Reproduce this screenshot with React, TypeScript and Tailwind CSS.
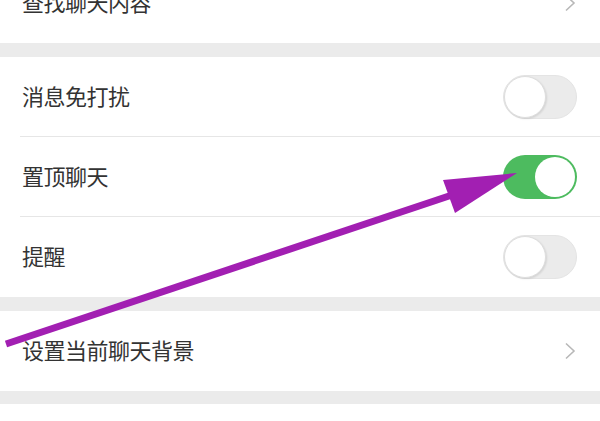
import React from "react";

const font = { fontFamily: '"Noto Sans CJK SC", "Noto Sans", sans-serif' };

function Chevron() {
  return (
    <svg width="12" height="18" viewBox="0 0 12 18" className="mr-[24px]">
      <polyline points="2,1.5 10,9 2,16.5" fill="none" stroke="#b8b8b8" strokeWidth="1.6" />
    </svg>
  );
}

function Toggle({ on }: { on: boolean }) {
  if (on) {
    return (
      <div className="mr-[23px] flex h-[44px] w-[74px] items-center justify-end rounded-full bg-[#4dbb5f] p-[2px]">
        <div className="h-[40px] w-[40px] rounded-full bg-white" />
      </div>
    );
  }
  return (
    <div className="mr-[23px] flex h-[44px] w-[74px] items-center justify-start rounded-full border border-[#e4e4e4] bg-[#ebebeb]">
      <div className="h-[42px] w-[42px] rounded-full border border-[#dedede] bg-white shadow-[1px_1px_2px_rgba(0,0,0,0.1)]" />
    </div>
  );
}

function Row({ label, children, divider }: { label: string; children: React.ReactNode; divider?: boolean }) {
  return (
    <div className="relative flex h-[80px] items-center justify-between bg-white pl-[22px]">
      <span className="mb-[5px] text-[22px] leading-none tracking-[-0.5px] text-[#333333]">{label}</span>
      {children}
      {divider && <div className="absolute bottom-0 left-[20px] right-0 h-px bg-[#e6e6e6]" />}
    </div>
  );
}

export default function App() {
  return (
    <div className="relative h-[421px] w-[600px] overflow-hidden bg-[#ebebeb]" style={font}>
      <div className="mt-[-37px]">
        <Row label="查找聊天内容">
          <Chevron />
        </Row>
      </div>
      <div className="h-[14px]" />
      <Row label="消息免打扰" divider>
        <Toggle on={false} />
      </Row>
      <Row label="置顶聊天" divider>
        <Toggle on={true} />
      </Row>
      <Row label="提醒">
        <Toggle on={false} />
      </Row>
      <div className="h-[14px]" />
      <Row label="设置当前聊天背景">
        <Chevron />
      </Row>
      <div className="h-[13px]" />
      <div className="h-[40px] bg-white" />

      <svg className="pointer-events-none absolute left-0 top-0" width="600" height="421" viewBox="0 0 600 421">
        <line x1="6" y1="344" x2="452" y2="195" stroke="#a21fb2" strokeWidth="7" />
        <polygon points="517,173 443,180 455,213" fill="#a21fb2" />
      </svg>
    </div>
  );
}
